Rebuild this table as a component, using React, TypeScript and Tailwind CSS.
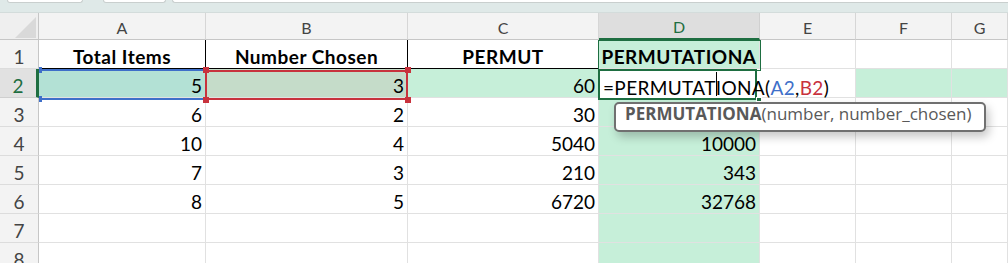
import type { ReactNode } from "react";

const COLS = ["A", "B", "C", "D", "E", "F", "G"];

// sheet values, columns A-D (E-G are empty)
const DATA: (string | number)[][] = [
  ["Total Items", "Number Chosen", "PERMUT", "PERMUTATIONA"],
  [5, 3, 60, ""],
  [6, 2, 30, 36],
  [10, 4, 5040, 10000],
  [7, 3, 210, 343],
  [8, 5, 6720, 32768],
  ["", "", "", ""],
  ["", "", "", ""],
];

const MINT = "bg-[#c6efd9]";

function fillFor(row: number, col: number) {
  if (row === 1) {
    if (col === 0) return "bg-[#b3e1d5]";
    if (col === 1) return "bg-[#c5dcc9]";
    if (col === 3 || col === 4) return "bg-white";
    return MINT;
  }
  if (col === 3) return MINT;
  return "bg-white";
}

function borderFor(row: number, col: number) {
  // header row of the table has dark rules under A1:C1 and between them
  if (row === 0 && col < 2) return "border-r border-b border-r-black border-b-black";
  if (row === 0 && col === 2) return "border-r border-b border-r-[#e1e1e1] border-b-black";
  if (row === 1 && col === 3) return "border-r border-b border-r-white border-b-[#e1e1e1]";
  return "border-r border-b border-[#e1e1e1]";
}

function Cell({ row, col, children }: { row: number; col: number; children?: ReactNode }) {
  const header = row === 0;
  return (
    <div
      className={`${fillFor(row, col)} ${borderFor(row, col)} flex items-end whitespace-nowrap pb-[2px] text-[19px] leading-[19px] text-black ${
        header ? "justify-center font-bold tracking-[0.5px]" : "justify-end pr-[3px]"
      }`}
    >
      {children}
    </div>
  );
}

function TopStrip() {
  return (
    <div className="flex h-[13px] bg-[#dfe9e8] border-b border-[#d3dcdb]">
      <div className="ml-[7px] h-[3px] w-[76px] rounded-b-[4px] border border-t-0 border-[#c9cfce] bg-white" />
      <div className="ml-[20px] h-[3px] w-[63px] rounded-b-[4px] border border-t-0 border-[#c9cfce] bg-white" />
      <div className="ml-[6px] h-[3px] flex-1 rounded-bl-[4px] border border-t-0 border-r-0 border-[#c9cfce] bg-white" />
    </div>
  );
}

function Corner() {
  return (
    <div className="relative bg-[#efefef] border-r border-b border-[#c6c6c6]">
      <svg className="absolute left-[15px] top-[4px]" width="21" height="21" viewBox="0 0 21 21">
        <polygon points="21,0 21,21 0,21" fill="#d9d9d9" />
      </svg>
    </div>
  );
}

export default function App() {
  return (
    <div className="relative h-[263px] w-[1008px] overflow-hidden bg-white font-['Lato','Liberation_Sans',sans-serif]">
      <TopStrip />

      <div className="grid grid-cols-[39px_167px_202px_191px_161px_96px_96px_1fr] grid-rows-[27px_repeat(8,29px)]">
        {/* column headers */}
        <Corner />
        {COLS.map((c) => {
          const active = c === "D";
          return (
            <div
              key={c}
              className={`flex items-end justify-center pb-[3px] text-[16px] leading-[16px] ${
                active
                  ? "bg-[#dedede] text-[#1e6e41] border-r border-r-[#d0d0d0] border-b-2 border-b-[#1e6e41]"
                  : "bg-[#f3f3f3] text-[#444444] border-r border-b border-r-[#d6d6d6] border-b-[#c6c6c6]"
              }`}
            >
              {c}
            </div>
          );
        })}

        {/* rows */}
        {DATA.map((vals, r) => {
          const active = r === 1;
          return [
            <div
              key={`h${r}`}
              className={`flex items-end justify-center pb-[2px] text-[19px] leading-[19px] border-b ${
                active
                  ? "bg-[#e1e1e1] text-[#1e6e41] border-r-[3px] border-r-[#1e6e41] border-b-[#cfcfcf]"
                  : "bg-[#f3f3f3] text-[#444444] border-r border-r-[#c6c6c6] border-b-[#dcdcdc]"
              }`}
            >
              {r + 1}
            </div>,
            ...COLS.map((_, c) => (
              <Cell key={`${r}-${c}`} row={r} col={c}>
                {c < 4 ? vals[c] : ""}
              </Cell>
            )),
          ];
        })}
      </div>

      {/* D1 outline */}
      <div className="absolute left-[598px] top-[40px] h-[31px] w-[163px] border border-[#1e6e41]" />

      {/* A2 reference range (blue) */}
      <div className="absolute left-[39px] top-[69px] h-[31px] w-[168px] border-y-2 border-[#3e6fc9]" />
      <div className="absolute left-[39px] top-[67px] h-[6px] w-[3px] bg-[#3e6fc9]" />
      <div className="absolute left-[39px] top-[96px] h-[6px] w-[3px] bg-[#3e6fc9]" />

      {/* B2 reference range (red) */}
      <div className="absolute left-[205px] top-[70px] h-[30px] w-[203px] border-2 border-[#c8323d]" />
      {[
        "left-[203px] top-[67px]",
        "left-[405px] top-[67px]",
        "left-[203px] top-[97px]",
        "left-[405px] top-[97px]",
      ].map((p) => (
        <div key={p} className={`absolute ${p} h-[6px] w-[6px] bg-[#c8323d]`} />
      ))}

      {/* D2 in edit mode */}
      <div className="absolute left-[598px] top-[69px] flex h-[31px] w-[159px] items-end border-2 border-[#1e6e41] bg-white pb-[1px] pl-[3px]">
        <span className="whitespace-nowrap text-[19px] leading-[19px] tracking-[0.35px] text-black">
          =PERMUTAT
          <span className="relative">
            <span className="absolute left-0 top-[-4px] h-[24px] w-px bg-black" />
          </span>
          IONA(<span className="text-[#3e6fc9]">A2</span>,<span className="text-[#c8323d]">B2</span>)
        </span>
      </div>
      <div className="absolute left-[756px] top-[97px] h-[5px] w-[6px] border border-white bg-[#1e6e41]" />

      {/* function tooltip */}
      <div className="absolute left-[614px] top-[102px] flex h-[30px] w-[372px] items-start rounded-[5px] border-2 border-[#707070] bg-white pl-[9px] pt-[1px] font-['Open_Sans',sans-serif] text-[17px] leading-[17px] text-[#595959] shadow-[3px_5px_10px_rgba(0,0,0,0.22)]">
        <span className="whitespace-nowrap">
          <span className="font-bold">PERMUTATIONA</span>(number, number_chosen)
        </span>
      </div>
    </div>
  );
}
